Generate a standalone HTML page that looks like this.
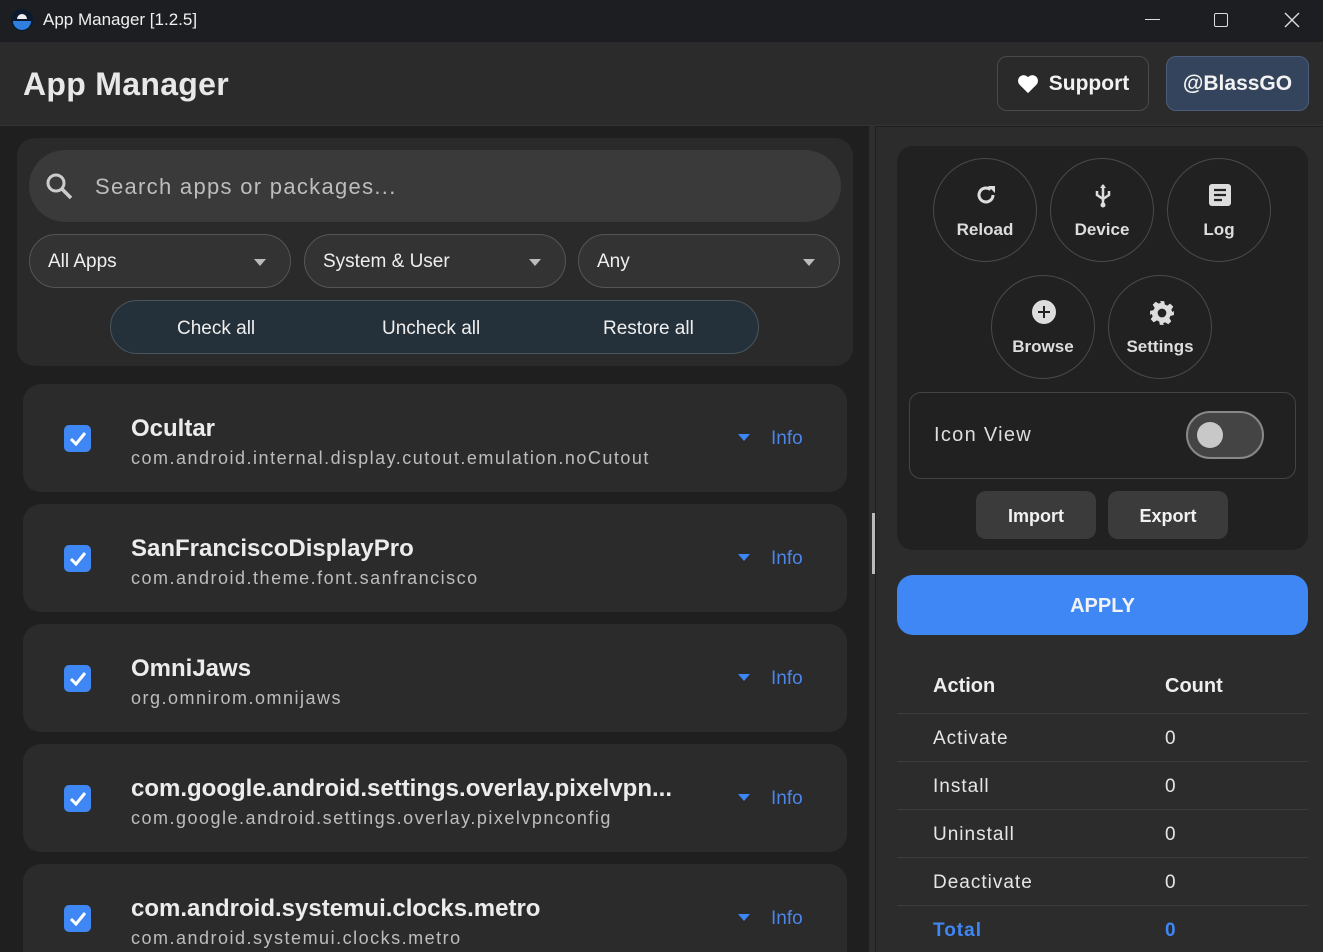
<!DOCTYPE html>
<html style="width:1323px;height:952px;overflow:hidden"><head><meta charset="utf-8"><style>
*{box-sizing:border-box;margin:0;padding:0}
body{width:1323px;height:952px;overflow:hidden;background:#1f1f1f;font-family:"Liberation Sans",sans-serif;color:#e8e8e8;position:relative}
.a{position:absolute}
.tb{left:0;top:0;width:1323px;height:42px;background:#1d1e22}
.hd{left:0;top:42px;width:1323px;height:84px;background:#2b2b2b;border-bottom:1px solid #333}
.btn{border-radius:10px;display:flex;align-items:center;justify-content:center;font-weight:bold;font-size:21px;color:#f2f2f2}
.card{left:23px;width:824px;height:108px;background:#2b2b2b;border-radius:18px}
.cb{left:41px;top:41px;width:27px;height:27px;background:#3f87f5;border-radius:5px}
.t{left:108px;top:31px;font-size:24px;font-weight:bold;color:#ececec;white-space:nowrap}
.s{left:108px;top:64px;font-size:18px;color:#bdbdbd;white-space:nowrap;letter-spacing:1.5px}
.arr{left:715px;top:50px;width:0;height:0;border-left:6px solid transparent;border-right:6px solid transparent;border-top:7px solid #3f87f5}
.inf{left:748px;top:44px;font-size:19px;color:#4a86e8}
.dd{top:234px;width:262px;height:54px;border:1.5px solid #555;border-radius:27px;background:#333;font-size:19px;color:#eee;padding:16px 18px}
.dd i{position:absolute;right:24px;top:24px;border-left:6px solid transparent;border-right:6px solid transparent;border-top:7px solid #bbb}
.circ{width:104px;height:104px;border:1.5px solid #4a4a4a;border-radius:50%;font-weight:bold;font-size:17px;color:#ddd;text-align:center;padding-top:61px}
.circ svg{position:absolute;left:40px;top:24px}
.row{left:897px;width:411px;height:48px;border-top:1px solid #3c3c3c;font-size:19px;color:#e6e6e6;letter-spacing:1px}
.row span{position:absolute;top:14px}
</style></head><body>
<div class="a tb"></div>
<svg class="a" style="left:10px;top:8px" width="24" height="24" viewBox="0 0 24 24"><circle cx="12" cy="12" r="11" fill="#0c1a2e"/><path d="M3 13h18a9 9 0 0 1-18 0z" fill="#2e7fe0"/><path d="M7 11a5 5 0 0 1 10 0z" fill="#eee"/></svg>
<div class="a" style="left:43px;top:10px;font-size:17px;color:#f0f0f0">App Manager [1.2.5]</div>
<div class="a" style="left:1145px;top:19px;width:15px;height:1px;background:#ddd"></div>
<div class="a" style="left:1214px;top:13px;width:14px;height:14px;border:1.5px solid #ddd;border-radius:2px"></div>
<svg class="a" style="left:1284px;top:12px" width="16" height="16"><path d="M1 1L15 15M15 1L1 15" stroke="#ddd" stroke-width="1.4"/></svg>
<div class="a hd"></div>
<div class="a" style="left:23px;top:66px;font-size:32px;font-weight:bold;color:#e8e8e8;letter-spacing:.3px">App Manager</div>
<div class="a btn" style="left:997px;top:56px;width:152px;height:55px;border:1.5px solid #4a4a4a;background:#2a2a2a"><svg width="22" height="20" viewBox="0 0 24 22" style="margin-right:10px"><path d="M12 21L2.5 11.5A5.5 5.5 0 0 1 12 3.5a5.5 5.5 0 0 1 9.5 8z" fill="#fff"/></svg>Support</div>
<div class="a btn" style="left:1166px;top:56px;width:143px;height:55px;border:1.5px solid #4b5d7a;background:#34445c">@BlassGO</div>

<div class="a" style="left:17px;top:138px;width:836px;height:228px;background:#2a2a2a;border-radius:18px"></div>
<div class="a" style="left:29px;top:150px;width:812px;height:72px;background:#3a3a3a;border-radius:36px"></div>
<svg class="a" style="left:44px;top:171px" width="30" height="30" viewBox="0 0 30 30"><circle cx="12" cy="12" r="8" stroke="#ccc" stroke-width="3" fill="none"/><path d="M18 18L27 27" stroke="#ccc" stroke-width="3.5"/></svg>
<div class="a" style="left:95px;top:174px;font-size:22px;color:#bdbdbd;letter-spacing:1.3px">Search apps or packages...</div>
<div class="a dd" style="left:29px">All Apps<i></i></div>
<div class="a dd" style="left:304px">System &amp; User<i></i></div>
<div class="a dd" style="left:578px">Any<i></i></div>
<div class="a" style="left:110px;top:300px;width:649px;height:54px;border:1.5px solid #48555c;border-radius:27px;background:#25313a;font-size:19px;color:#eee">
<span class="a" style="left:66px;top:17px">Check all</span><span class="a" style="left:271px;top:17px">Uncheck all</span><span class="a" style="left:492px;top:17px">Restore all</span></div>

<div class="a card" style="top:384px"><div class="a cb"><svg width="27" height="27"><path d="M7 14l5 5 9-11" stroke="#fff" stroke-width="3" fill="none"/></svg></div><div class="a t">Ocultar</div><div class="a s">com.android.internal.display.cutout.emulation.noCutout</div><div class="a arr"></div><div class="a inf">Info</div></div>
<div class="a card" style="top:504px"><div class="a cb"><svg width="27" height="27"><path d="M7 14l5 5 9-11" stroke="#fff" stroke-width="3" fill="none"/></svg></div><div class="a t">SanFranciscoDisplayPro</div><div class="a s">com.android.theme.font.sanfrancisco</div><div class="a arr"></div><div class="a inf">Info</div></div>
<div class="a card" style="top:624px"><div class="a cb"><svg width="27" height="27"><path d="M7 14l5 5 9-11" stroke="#fff" stroke-width="3" fill="none"/></svg></div><div class="a t">OmniJaws</div><div class="a s">org.omnirom.omnijaws</div><div class="a arr"></div><div class="a inf">Info</div></div>
<div class="a card" style="top:744px"><div class="a cb"><svg width="27" height="27"><path d="M7 14l5 5 9-11" stroke="#fff" stroke-width="3" fill="none"/></svg></div><div class="a t">com.google.android.settings.overlay.pixelvpn...</div><div class="a s">com.google.android.settings.overlay.pixelvpnconfig</div><div class="a arr"></div><div class="a inf">Info</div></div>
<div class="a card" style="top:864px"><div class="a cb"><svg width="27" height="27"><path d="M7 14l5 5 9-11" stroke="#fff" stroke-width="3" fill="none"/></svg></div><div class="a t">com.android.systemui.clocks.metro</div><div class="a s">com.android.systemui.clocks.metro</div><div class="a arr"></div><div class="a inf">Info</div></div>

<div class="a" style="left:869px;top:126px;width:6px;height:826px;background:#2e2e2e"></div>
<div class="a" style="left:872px;top:513px;width:3px;height:61px;background:#bbb"></div>

<div class="a" style="left:876px;top:127px;width:447px;height:825px;background:#2c2c2c"></div>
<div class="a" style="left:897px;top:146px;width:411px;height:404px;background:#212121;border-radius:16px"></div>
<div class="a circ" style="left:933px;top:158px"><svg width="24" height="24" viewBox="0 0 24 24"><path d="M19 12a7 7 0 1 1-2.5-5.4" stroke="#ddd" stroke-width="3" fill="none"/><path d="M14 3h7v7z" fill="#ddd"/></svg>Reload</div>
<div class="a circ" style="left:1050px;top:158px"><svg width="24" height="26" viewBox="0 0 24 26"><path d="M12 2v20M6 8v4l6 4 6-4V8" stroke="#ddd" stroke-width="2.5" fill="none"/><circle cx="12" cy="22" r="2.5" fill="#ddd"/><path d="M9 5l3-4 3 4z" fill="#ddd"/></svg>Device</div>
<div class="a circ" style="left:1167px;top:158px"><svg width="24" height="24" viewBox="0 0 24 24"><rect x="1" y="1" width="22" height="22" rx="3" fill="#ddd"/><path d="M6 7h12M6 12h12M6 17h8" stroke="#222" stroke-width="2.2"/></svg>Log</div>
<div class="a circ" style="left:991px;top:275px"><svg width="24" height="24" viewBox="0 0 24 24"><circle cx="12" cy="12" r="12" fill="#ddd"/><path d="M12 6v12M6 12h12" stroke="#222" stroke-width="2"/></svg>Browse</div>
<div class="a circ" style="left:1108px;top:275px"><svg width="26" height="26" viewBox="0 0 24 24"><path fill="#ddd" d="M10 1h4l.6 3.2 2.2 1 2.8-1.8 2.8 2.8-1.8 2.8 1 2.2L23 10v4l-3.2.6-1 2.2 1.8 2.8-2.8 2.8-2.8-1.8-2.2 1L14 23h-4l-.6-3.2-2.2-1-2.8 1.8-2.8-2.8 1.8-2.8-1-2.2L1 14v-4l3.2-.6 1-2.2L3.4 4.4l2.8-2.8 2.8 1.8 2.2-1z"/><circle cx="12" cy="12" r="4" fill="#222"/></svg>Settings</div>
<div class="a" style="left:909px;top:392px;width:387px;height:87px;border:1.5px solid #444;border-radius:12px"></div>
<div class="a" style="left:934px;top:424px;font-size:20px;color:#ddd;letter-spacing:1.3px">Icon View</div>
<div class="a" style="left:1186px;top:411px;width:78px;height:48px;border:2.5px solid #888;border-radius:24px;background:#444"></div>
<div class="a" style="left:1197px;top:422px;width:26px;height:26px;border-radius:50%;background:#c8c8c8"></div>
<div class="a btn" style="left:976px;top:491px;width:120px;height:48px;background:#3b3b3b;font-size:18px;padding-top:3px">Import</div>
<div class="a btn" style="left:1108px;top:491px;width:120px;height:48px;background:#3b3b3b;font-size:18px;padding-top:3px">Export</div>
<div class="a btn" style="left:897px;top:575px;width:411px;height:60px;background:#3f87f5;border-radius:16px;font-size:20px;padding-top:2px">APPLY</div>
<div class="a" style="left:933px;top:675px;font-size:20px;font-weight:bold;color:#eee">Action</div>
<div class="a" style="left:1165px;top:675px;font-size:20px;font-weight:bold;color:#eee">Count</div>
<div class="a row" style="top:713px"><span style="left:36px">Activate</span><span style="left:268px">0</span></div>
<div class="a row" style="top:761px"><span style="left:36px">Install</span><span style="left:268px">0</span></div>
<div class="a row" style="top:809px"><span style="left:36px">Uninstall</span><span style="left:268px">0</span></div>
<div class="a row" style="top:857px"><span style="left:36px">Deactivate</span><span style="left:268px">0</span></div>
<div class="a row" style="top:905px;color:#3f87f5;font-weight:bold"><span style="left:36px">Total</span><span style="left:268px">0</span></div>
</body></html>
